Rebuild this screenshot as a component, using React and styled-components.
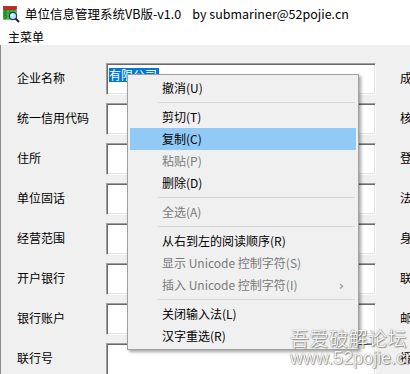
import styled, { createGlobalStyle } from 'styled-components';

const FONT = `"Noto Sans CJK SC", "Microsoft YaHei", "Liberation Sans", sans-serif`;

const GlobalStyle = createGlobalStyle`
  html, body {
    margin: 0;
    padding: 0;
    background: #f0f0f0;
  }
  body {
    font-family: ${FONT};
    font-size: 12px;
    color: #000;
  }
`;

const rows = [
  { label: '企业名称', right: '成立日期', value: '有限公司' },
  { label: '统一信用代码', right: '核准日期' },
  { label: '住所', right: '登记机关' },
  { label: '单位固话', right: '法定代表人' },
  { label: '经营范围', right: '身份证号' },
  { label: '开户银行', right: '联系电话' },
  { label: '银行账户', right: '邮编' },
  { label: '联行号', right: '授权人', tall: true },
];

const menuItems = [
  { text: '撤消(U)' },
  { sep: true },
  { text: '剪切(T)' },
  { text: '复制(C)', active: true },
  { text: '粘贴(P)', disabled: true },
  { text: '删除(D)' },
  { sep: true },
  { text: '全选(A)', disabled: true },
  { sep: true },
  { text: '从右到左的阅读顺序(R)' },
  { text: '显示 Unicode 控制字符(S)', disabled: true },
  { text: '插入 Unicode 控制字符(I)', disabled: true, sub: true },
  { sep: true },
  { text: '关闭输入法(L)' },
  { text: '汉字重选(R)' },
];

function AppIcon() {
  return (
    <svg width="17" height="17" viewBox="0 0 17 17">
      <rect x="0.5" y="0.5" width="13" height="3" fill="#e01818" stroke="#7a1010" strokeWidth="0.6" />
      {[0, 1, 2].map((r) =>
        [0, 1, 2, 3].map((c) => (
          <rect
            key={`${r}-${c}`}
            x={0.5 + c * 3.3}
            y={4 + r * 3.2}
            width="3"
            height="2.8"
            fill={c === 0 ? '#1aa01a' : '#2ed02e'}
            stroke="#0d600d"
            strokeWidth="0.4"
          />
        ))
      )}
      <line x1="12.5" y1="12.5" x2="16" y2="16" stroke="#202020" strokeWidth="2" />
      <circle cx="10" cy="10" r="3.6" fill="#bfe3ff" stroke="#1a3d7a" strokeWidth="1.2" />
      <circle cx="9" cy="9" r="1" fill="#ffffff" />
    </svg>
  );
}

export default function App() {
  return (
    <>
      <GlobalStyle />
      <Window>
        <TitleBar>
          <AppIcon />
          <Title>单位信息管理系统VB版-v1.0    by submariner@52pojie.cn</Title>
        </TitleBar>
        <MenuBar>
          <MenuBarItem>主菜单</MenuBarItem>
        </MenuBar>
        <Body>
          <Form>
            {rows.map((row) => (
              <Row key={row.label}>
                <Label>{row.label}</Label>
                <TextBox $tall={row.tall}>
                  {row.value && <Selected>{row.value}</Selected>}
                </TextBox>
                <RightLabel>{row.right}</RightLabel>
              </Row>
            ))}
          </Form>

          <ContextMenu>
            {menuItems.map((item, i) =>
              item.sep ? (
                <Separator key={i} />
              ) : (
                <MenuItem key={i} $active={item.active} $disabled={item.disabled}>
                  <span>{item.text}</span>
                  {item.sub && <Arrow>›</Arrow>}
                </MenuItem>
              )
            )}
          </ContextMenu>

          <Watermark>
            <WatermarkTitle>吾爱破解论坛</WatermarkTitle>
            <WatermarkUrl>www.52pojie.cn</WatermarkUrl>
          </Watermark>
        </Body>
      </Window>
    </>
  );
}

const Window = styled.div`
  width: 410px;
  height: 374px;
  overflow: hidden;
  display: flex;
  flex-direction: column;
  background: #f0f0f0;
`;

const TitleBar = styled.div`
  height: 28px;
  background: #fff;
  display: flex;
  align-items: center;
  gap: 5px;
  padding-left: 3px;
  flex-shrink: 0;
`;

const Title = styled.span`
  white-space: pre;
  font-size: 12.5px;
  color: #000;
  line-height: 1;
`;

const MenuBar = styled.div`
  height: 17px;
  background: #fff;
  display: flex;
  align-items: center;
  padding-left: 8px;
  flex-shrink: 0;
`;

const MenuBarItem = styled.span`
  font-size: 12px;
  line-height: 1;
`;

const Body = styled.div`
  position: relative;
  flex: 1;
  background: #f0f0f0;
  border-left: 1px solid #8a8a8a;
`;

const Form = styled.div`
  display: flex;
  flex-direction: column;
  gap: 8px;
  padding-top: 18px;
`;

const Row = styled.div`
  display: flex;
  align-items: center;
  height: 32px;
`;

const Label = styled.div`
  width: 105px;
  padding-left: 16px;
  box-sizing: border-box;
  font-size: 12px;
  line-height: 1;
  margin-top: -3px;
  flex-shrink: 0;
`;

const TextBox = styled.div`
  width: 270px;
  height: ${(p) => (p.$tall ? '40px' : '32px')};
  align-self: flex-start;
  box-sizing: border-box;
  background: #fff;
  border-top: 1px solid #a0a0a0;
  border-left: 1px solid #a0a0a0;
  border-right: 1px solid #fff;
  border-bottom: 1px solid #fff;
  box-shadow: inset 1px 1px 0 #696969, inset -1px -1px 0 #e3e3e3;
  padding: 2px 0 0 2px;
  flex-shrink: 0;
  font-size: 12px;
`;

const Selected = styled.span`
  display: inline-block;
  background: #0078d7;
  color: #fff;
  line-height: 14px;
  padding-right: 2px;
`;

const RightLabel = styled.div`
  margin-left: 24px;
  white-space: nowrap;
  font-size: 12px;
  line-height: 1;
  margin-top: -3px;
`;

const ContextMenu = styled.div`
  position: absolute;
  left: 126px;
  top: 29px;
  width: 232px;
  box-sizing: border-box;
  background: #f0f0f0;
  border: 1px solid #a0a0a0;
  box-shadow: 2px 2px 3px rgba(0, 0, 0, 0.35);
  padding: 2px;
  display: flex;
  flex-direction: column;
`;

const MenuItem = styled.div`
  height: 22px;
  display: flex;
  align-items: center;
  justify-content: space-between;
  padding: 0 12px 0 32px;
  font-size: 12px;
  line-height: 1;
  white-space: nowrap;
  color: ${(p) => (p.$disabled ? '#7a7a7a' : '#000')};
  background: ${(p) => (p.$active ? '#91c9f7' : 'transparent')};
`;

const Arrow = styled.span`
  font-size: 13px;
  color: #8a8a8a;
  font-family: "DejaVu Sans", sans-serif;
`;

const Separator = styled.div`
  height: 1px;
  background: #d7d7d7;
  margin: 3px 1px 3px 28px;
`;

const Watermark = styled.div`
  position: absolute;
  left: 289px;
  top: 283px;
  display: flex;
  flex-direction: column;
  align-items: flex-start;
  pointer-events: none;
  color: rgba(255, 255, 255, 0.95);
  text-shadow: 0 0 1px rgba(0, 0, 0, 0.6), 1px 1px 1px rgba(0, 0, 0, 0.35);
  line-height: 1;
`;

const WatermarkTitle = styled.span`
  font-size: 19px;
  letter-spacing: 0.5px;
`;

const WatermarkUrl = styled.span`
  font-family: "Liberation Sans", sans-serif;
  font-size: 18px;
  margin-top: 2px;
`;
